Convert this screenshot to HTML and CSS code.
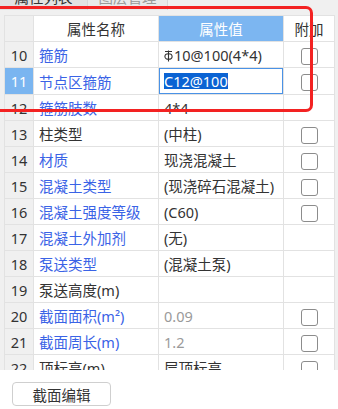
FILE: index.html
```html
<!DOCTYPE html>
<html lang="zh-CN">
<head>
    <meta charset="UTF-8">
    <meta name="viewport" content="width=device-width, initial-scale=1.0">
    <title>属性列表</title>
    <link rel="stylesheet" href="styles.css">
</head>
<body>

    <div class="panel">
        <!-- 顶部标签 -->
        <div class="tabs">
            <div class="tab active">属性列表</div>
            <div class="tab">图层管理</div>
        </div>

        <div class="grid-wrap">
            <table class="props">
                <colgroup>
                    <col class="c-num">
                    <col class="c-name">
                    <col class="c-val">
                    <col class="c-add">
                </colgroup>
                <thead>
                    <tr>
                        <th class="num"></th>
                        <th>属性名称</th>
                        <th class="hl">属性值</th>
                        <th>附加</th>
                    </tr>
                </thead>
                <tbody>
                    <tr>
                        <td class="num">10</td>
                        <td class="name blue">箍筋</td>
                        <td class="val"><svg class="rebar" width="9" height="12" viewBox="0 0 9 12"><path d="M1 1.5H8M4.5 0.5V11.5" stroke="#333" stroke-width="1.1" fill="none"/><ellipse cx="4.5" cy="6.5" rx="3.6" ry="2.8" stroke="#333" stroke-width="1.1" fill="none"/></svg>10@100(4*4)</td>
                        <td class="add"><span class="chk"></span></td>
                    </tr>
                    <tr class="current">
                        <td class="num">11</td>
                        <td class="name blue">节点区箍筋</td>
                        <td class="val edit"><div class="editor"><span class="sel">C12@100</span></div></td>
                        <td class="add"><span class="chk"></span></td>
                    </tr>
                    <tr>
                        <td class="num">12</td>
                        <td class="name blue">箍筋肢数</td>
                        <td class="val">4*4</td>
                        <td class="add"></td>
                    </tr>
                    <tr>
                        <td class="num">13</td>
                        <td class="name">柱类型</td>
                        <td class="val">(中柱)</td>
                        <td class="add"><span class="chk"></span></td>
                    </tr>
                    <tr>
                        <td class="num">14</td>
                        <td class="name blue">材质</td>
                        <td class="val">现浇混凝土</td>
                        <td class="add"><span class="chk"></span></td>
                    </tr>
                    <tr>
                        <td class="num">15</td>
                        <td class="name blue">混凝土类型</td>
                        <td class="val">(现浇碎石混凝土)</td>
                        <td class="add"><span class="chk"></span></td>
                    </tr>
                    <tr>
                        <td class="num">16</td>
                        <td class="name blue">混凝土强度等级</td>
                        <td class="val">(C60)</td>
                        <td class="add"><span class="chk"></span></td>
                    </tr>
                    <tr>
                        <td class="num">17</td>
                        <td class="name blue">混凝土外加剂</td>
                        <td class="val">(无)</td>
                        <td class="add"></td>
                    </tr>
                    <tr>
                        <td class="num">18</td>
                        <td class="name blue">泵送类型</td>
                        <td class="val">(混凝土泵)</td>
                        <td class="add"></td>
                    </tr>
                    <tr>
                        <td class="num">19</td>
                        <td class="name">泵送高度(m)</td>
                        <td class="val"></td>
                        <td class="add"></td>
                    </tr>
                    <tr>
                        <td class="num">20</td>
                        <td class="name blue">截面面积(m²)</td>
                        <td class="val muted">0.09</td>
                        <td class="add"><span class="chk"></span></td>
                    </tr>
                    <tr>
                        <td class="num">21</td>
                        <td class="name blue">截面周长(m)</td>
                        <td class="val muted">1.2</td>
                        <td class="add"><span class="chk"></span></td>
                    </tr>
                    <tr>
                        <td class="num">22</td>
                        <td class="name">顶标高(m)</td>
                        <td class="val">层顶标高</td>
                        <td class="add"><span class="chk"></span></td>
                    </tr>
                </tbody>
            </table>
        </div>

        <div class="footer">
            <button class="btn">截面编辑</button>
        </div>

        <!-- 红框标注 -->
        <div class="mark"></div>
    </div>

</body>
</html>
```

FILE: styles.css
```css
* {
    margin: 0;
    padding: 0;
    box-sizing: border-box;
}

body {
    font-family: "Noto Sans", "Noto Sans CJK SC", sans-serif;
    font-size: 14.5px;
    color: #333;
    background: #fff;
    overflow: hidden;
}

.panel {
    position: relative;
    width: 338px;
    height: 409px;
    overflow: hidden;
}

/* 标签栏 */
.tabs {
    display: flex;
    height: 24px;
    margin-top: -14px;
    background: #f0f0f0;
}

.tab {
    width: 80px;
    line-height: 22px;
    text-align: center;
    color: #999;
    background: #e9e9e9;
    border-right: 1px solid #d6d6d6;
}

.tab.active {
    width: 88px;
    color: #333;
    background: #e2e2e2;
}

.grid-wrap {
    height: 360px;
    padding: 5px 0 0 4px;
    background: #f0f0f0;
    overflow: hidden;
}

.props {
    width: 330px;
    table-layout: fixed;
    border-collapse: collapse;
    background: #fff;
}

.c-num { width: 29px; }
.c-name { width: 125px; }
.c-val { width: 125px; }
.c-add { width: 51px; }

.props th,
.props td {
    height: 26px;
    border: 1px solid #e2e2e2;
    white-space: nowrap;
    overflow: hidden;
    font-weight: normal;
}

.props th {
    text-align: center;
    height: 26px;
}

.props th.hl {
    background: #7cb6f1;
    color: #fff;
}

.props .num {
    background: #f0f0f0;
    text-align: center;
    color: #333;
}

.props tr.current .num {
    background: #7ab5f0;
    color: #fff;
}

.name {
    padding: 0 5px;
}

.name.blue {
    color: #3a63e6;
}

.val {
    padding: 0 5px;
}

.val.muted {
    color: #9a9a9a;
}

.rebar {
    vertical-align: -1px;
    margin-right: 1px;
}

.val.edit {
    padding: 0;
}

.editor {
    height: 26px;
    border: 1px solid #4a92e6;
    padding: 0 0 0 4px;
    display: flex;
    align-items: center;
}

.sel {
    background: #0b63d3;
    color: #fff;
    line-height: 16px;
}

.add {
    text-align: center;
}

.chk {
    display: inline-block;
    width: 17px;
    height: 17px;
    border: 1px solid #8c8c8c;
    border-radius: 3px;
    background: #fff;
    vertical-align: middle;
}

/* 底部按钮 */
.footer {
    padding: 12px 0 0 12px;
}

.btn {
    width: 99px;
    height: 24px;
    font-family: inherit;
    font-size: 14.5px;
    color: #333;
    background: #fff;
    border: 1px solid #cfcfcf;
    border-radius: 4px;
}

.mark {
    position: absolute;
    left: -10px;
    top: 6px;
    width: 323px;
    height: 106px;
    border: 3px solid #f32222;
    border-radius: 0 7px 7px 0;
}
```
